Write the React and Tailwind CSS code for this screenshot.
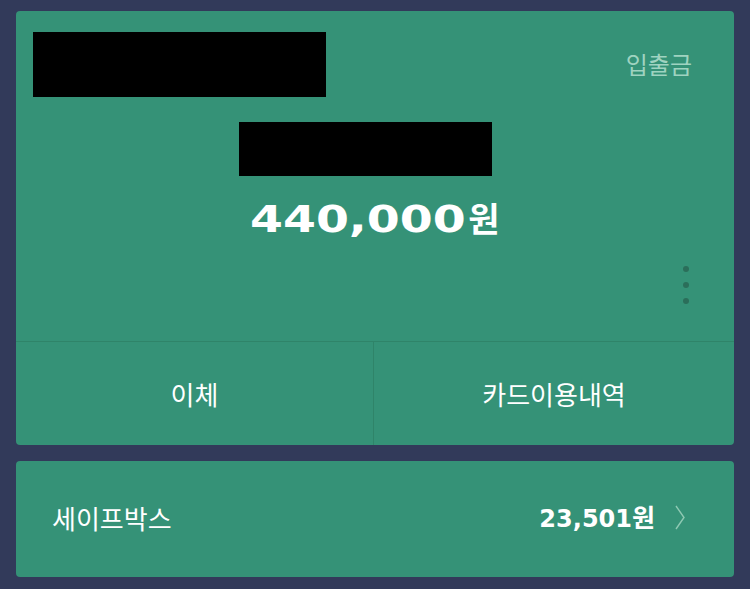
export default function App() {
  const kr = { fontFamily: '"Noto Sans CJK KR", "Noto Sans", sans-serif' };
  return (
    <div className="w-[750px] h-[589px] bg-[#323a5a] pt-[11px] px-[16px]" style={kr}>
      <div className="w-[718px] rounded-[4px] bg-[#359277] flex flex-col">
        <div className="h-[331px] border-b border-[#2f8469] flex flex-col">
          <div className="flex justify-between items-start pt-[21px] pl-[17px] pr-[42px]">
            <div className="w-[293px] h-[65px] bg-black" />
            <div className="mt-[20px] text-[24px] leading-[24px] text-[#9fd3c0]">입출금</div>
          </div>
          <div className="pl-[223px] mt-[25px]">
            <div className="w-[253px] h-[54px] bg-black" />
          </div>
          <div className="mt-[23px] h-[37px] flex justify-center items-baseline text-white">
            <span className="inline-block w-[218px] h-[37px] leading-[37px] text-[37px] font-bold" style={{ fontFamily: '"DejaVu Sans", sans-serif' }}>
              <span className="inline-block origin-left scale-x-[1.28]">440,000</span>
            </span>
            <span className="text-[34px] leading-[37px] font-bold">원</span>
          </div>
          <div className="flex justify-end pr-[45px] mt-[30px]">
            <div className="flex flex-col gap-[10px]">
              <div className="w-[6px] h-[6px] rounded-full bg-[#2b6e5a]" />
              <div className="w-[6px] h-[6px] rounded-full bg-[#2b6e5a]" />
              <div className="w-[6px] h-[6px] rounded-full bg-[#2b6e5a]" />
            </div>
          </div>
        </div>
        <div className="h-[103px] flex text-white text-[26px]">
          <div className="w-[358px] border-r border-[#2f8469] flex items-center justify-center">이체</div>
          <div className="flex-1 flex items-center justify-center">카드이용내역</div>
        </div>
      </div>
      <div className="w-[718px] h-[116px] mt-[16px] rounded-[4px] bg-[#359277] flex items-center justify-between pl-[36px] pr-[49px] text-white">
        <div className="text-[26px] leading-[26px] -mt-[3px]">세이프박스</div>
        <div className="flex items-center gap-[20px] -mt-[3px]">
          <div className="flex items-baseline">
            <span className="text-[24px] font-bold" style={{ fontFamily: '"DejaVu Sans", sans-serif' }}>
              <span className="inline-block">23,501</span>
            </span>
            <span className="text-[25px] font-bold">원</span>
          </div>
          <svg width="10" height="25" viewBox="0 0 10 25" fill="none">
            <path d="M1 1 L9 12.5 L1 24" stroke="#8fc9b3" strokeWidth="1.4" />
          </svg>
        </div>
      </div>
    </div>
  );
}
